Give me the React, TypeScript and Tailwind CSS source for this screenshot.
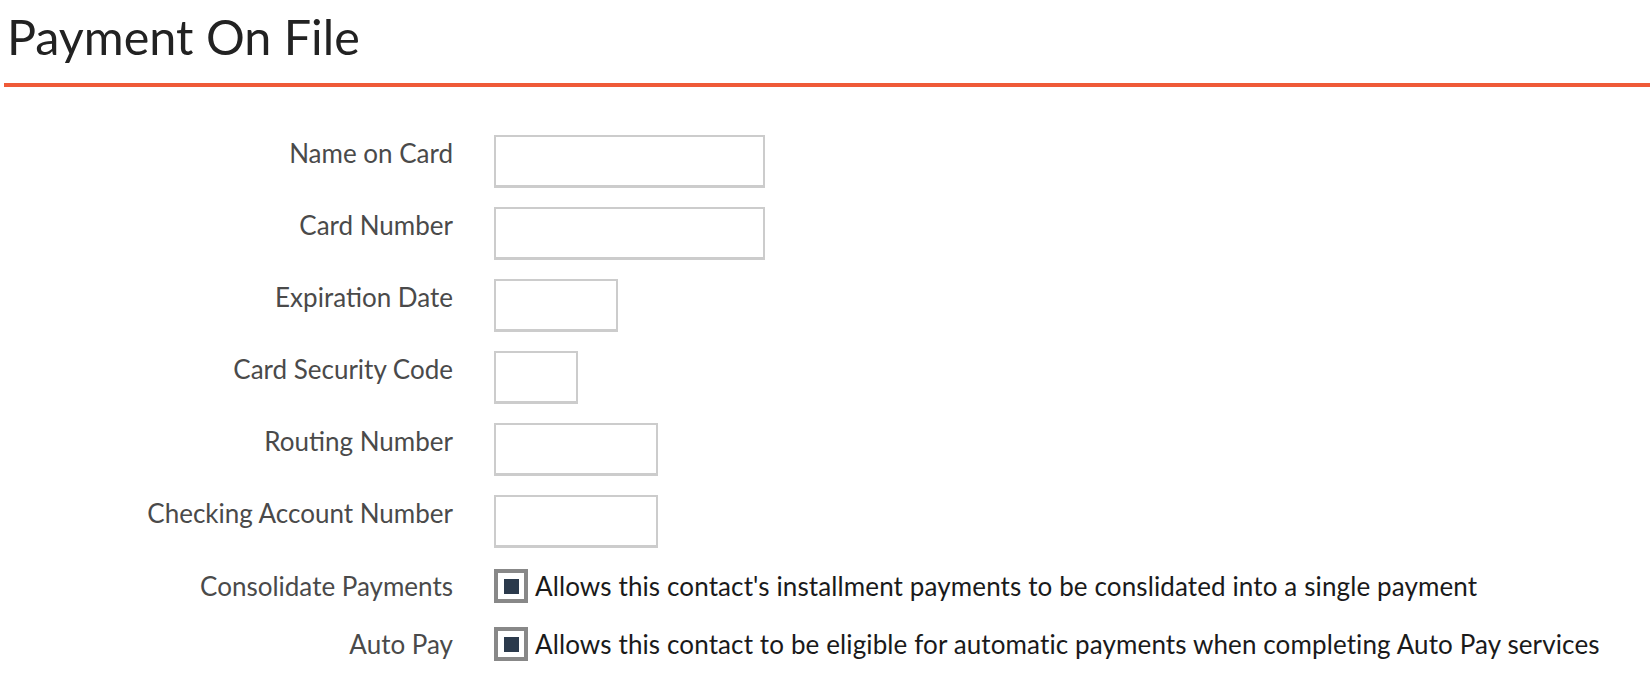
import React from "react";

type Field = { label: string; width: string };

const fields: Field[] = [
  { label: "Name on Card", width: "w-[271px]" },
  { label: "Card Number", width: "w-[271px]" },
  { label: "Expiration Date", width: "w-[124px]" },
  { label: "Card Security Code", width: "w-[84px]" },
  { label: "Routing Number", width: "w-[164px]" },
  { label: "Checking Account Number", width: "w-[164px]" },
];

const options = [
  {
    label: "Consolidate Payments",
    text: "Allows this contact's installment payments to be conslidated into a single payment",
  },
  {
    label: "Auto Pay",
    text: "Allows this contact to be eligible for automatic payments when completing Auto Pay services",
  },
];

const Checkbox = () => (
  <div className="w-[34px] h-[34px] shrink-0 border-[4px] border-[#888888] bg-white flex items-center justify-center">
    <div className="w-[15px] h-[15px] bg-[#2b3a4c]" />
  </div>
);

const App = () => {
  return (
    <div
      className="w-[1650px] h-[692px] bg-white overflow-hidden pl-[4px]"
      style={{ fontFamily: "Lato, 'Noto Sans', sans-serif" }}
    >
      {/* header */}
      <h1 className="pl-[3px] pt-[6px] h-[83px] text-[48.5px] leading-[60px] text-[#222222] font-normal">
        Payment On File
      </h1>
      <div className="h-[4px] bg-[#ef5a38]" />

      <div className="pt-[48px]">
        {fields.map((f) => (
          <div key={f.label} className="flex items-start mb-[19px]">
            <label className="w-[449px] text-right pt-[3px] text-[26px] leading-[30px] text-[#4a4a4a]">
              {f.label}
            </label>
            <input
              type="text"
              className={`${f.width} h-[53px] ml-[41px] border-2 border-b-[3px] border-[#cccccc] bg-white outline-none`}
            />
          </div>
        ))}

        <div className="pt-[2px] flex flex-col gap-[24px]">
          {options.map((o) => (
            <div key={o.label} className="flex items-center">
              <span className="w-[449px] text-right text-[26px] leading-[30px] text-[#4a4a4a]">
                {o.label}
              </span>
              <div className="ml-[41px] flex items-center gap-[7px]">
                <Checkbox />
                <span className="text-[26px] leading-[30px] tracking-[0.12px] text-[#1a1a1a] whitespace-nowrap">
                  {o.text}
                </span>
              </div>
            </div>
          ))}
        </div>
      </div>
    </div>
  );
};

export default App;
